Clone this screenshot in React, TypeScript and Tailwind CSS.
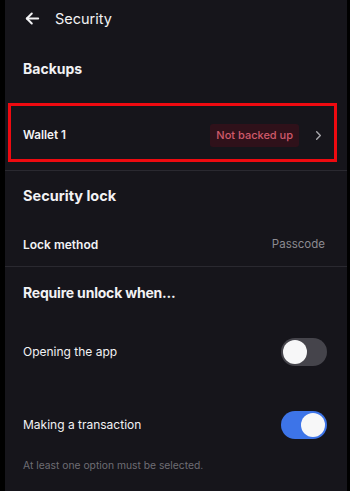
import React from "react";

interface ToggleProps {
  on: boolean;
}

const Toggle: React.FC<ToggleProps> = ({ on }) => (
  <div
    className={`flex h-[28px] w-[46px] items-center rounded-full p-[2px] ${
      on ? "justify-end bg-[#3d74e8]" : "justify-start bg-[#45444b]"
    }`}
  >
    <div className="h-[24px] w-[24px] rounded-full bg-[#f7f7f8]" />
  </div>
);

const App: React.FC = () => {
  return (
    <div
      className="h-[491px] w-[350px] overflow-hidden border-l-[5px] border-r-[3px] border-black bg-[#16151b] text-[#f2f2f4]"
      style={{ fontFamily: "Inter, 'Noto Sans', sans-serif" }}
    >
      {/* Header */}
      <div className="flex h-[37px] items-center pl-[19px]">
        <svg width="17" height="17" viewBox="0 0 24 24" fill="none" stroke="#f2f2f4" strokeWidth="2.8" strokeLinecap="round" strokeLinejoin="round">
          <path d="M20 12H4" />
          <path d="M11 5l-7 7 7 7" />
        </svg>
        <span className="ml-[14px] text-[14.5px]">Security</span>
      </div>

      {/* Backups */}
      <div className="mt-[21px] pl-[18px] text-[14px] font-bold leading-[22px]">Backups</div>

      <div className="mt-[23px] ml-[3px] mr-[10px] flex h-[59px] items-center border-[3px] border-[#ee0a10] pt-[6px] pl-[12px] pr-[10px]">
        <span className="text-[11.7px] font-semibold">Wallet 1</span>
        <span className="ml-auto rounded-[3px] bg-[#2f111a] px-[6px] py-[3px] text-[11px] font-medium text-[#cf5a6b]">
          Not backed up
        </span>
        <svg className="ml-[14px]" width="11" height="11" viewBox="0 0 24 24" fill="none" stroke="#a9a8ad" strokeWidth="3" strokeLinecap="round" strokeLinejoin="round">
          <path d="M8 4l8 8-8 8" />
        </svg>
      </div>

      <div className="mt-[8px] h-px bg-[#2a2930]" />

      {/* Security lock */}
      <div className="mt-[14px] pl-[18px] text-[14.5px] font-bold">Security lock</div>
      <div className="mt-[29px] flex items-center pl-[18px] pr-[22px]">
        <span className="text-[12px] font-semibold">Lock method</span>
        <span className="ml-auto text-[11.5px] text-[#8c8b91]">Passcode</span>
      </div>

      <div className="mt-[12px] h-px bg-[#2a2930]" />

      {/* Require unlock */}
      <div className="mt-[15px] pl-[18px] text-[14px] font-bold tracking-[-0.2px]">Require unlock when...</div>

      <div className="mt-[35px] flex items-center pl-[18px] pr-[20px]">
        <span className="text-[12px]">Opening the app</span>
        <div className="ml-auto">
          <Toggle on={false} />
        </div>
      </div>

      <div className="mt-[45px] flex items-center pl-[18px] pr-[20px]">
        <span className="text-[12px]">Making a transaction</span>
        <div className="ml-auto">
          <Toggle on={true} />
        </div>
      </div>

      <div className="mt-[19px] pl-[18px] text-[10.3px] text-[#6e6d74]">
        At least one option must be selected.
      </div>
    </div>
  );
};

export default App;
